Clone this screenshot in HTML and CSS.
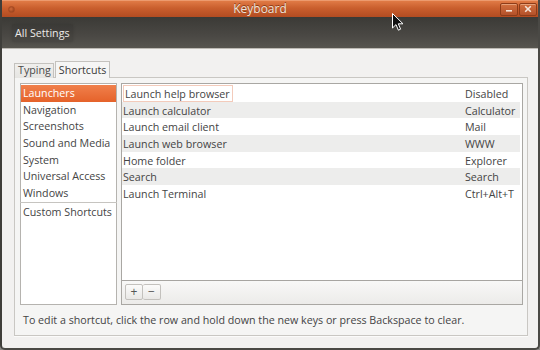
FILE: index.html
```html
<!DOCTYPE html>
<html>
<head>
<meta charset="utf-8">
<link rel="stylesheet" href="styles.css">
</head>
<body>
<div class="window">
  <div class="titlebar">
    <span class="menu-dot"></span>
    <span class="title">Keyboard</span>
    <div class="wbtns">
      <span class="wbtn"><svg width="8" height="8" viewBox="0 0 8 8"><rect x="1" y="5" width="6" height="1.6" fill="#f3e6dc"/></svg></span>
      <span class="wbtn"><svg width="8" height="8" viewBox="0 0 8 8"><path d="M1.2 1.2 L6.8 6.8 M6.8 1.2 L1.2 6.8" stroke="#f3e6dc" stroke-width="1.6"/></svg></span>
    </div>
  </div>
  <div class="toolbar"><span class="allsettings">All Settings</span></div>
  <div class="content">
    <div class="tabs">
      <span class="tab">Typing</span>
      <span class="tab active">Shortcuts</span>
    </div>
    <div class="panel">
      <div class="lists">
        <div class="cats">
          <div class="item selected">Launchers</div>
          <div class="item">Navigation</div>
          <div class="item">Screenshots</div>
          <div class="item">Sound and Media</div>
          <div class="item">System</div>
          <div class="item">Universal Access</div>
          <div class="item">Windows</div>
          <div class="sep"></div>
          <div class="item">Custom Shortcuts</div>
        </div>
        <div class="shortcuts">
          <div class="rows">
            <div class="row"><span class="name"><span class="focus">Launch help browser</span></span><span class="accel">Disabled</span></div>
            <div class="row odd"><span class="name">Launch calculator</span><span class="accel">Calculator</span></div>
            <div class="row"><span class="name">Launch email client</span><span class="accel">Mail</span></div>
            <div class="row odd"><span class="name">Launch web browser</span><span class="accel">WWW</span></div>
            <div class="row"><span class="name">Home folder</span><span class="accel">Explorer</span></div>
            <div class="row odd"><span class="name">Search</span><span class="accel">Search</span></div>
            <div class="row"><span class="name">Launch Terminal</span><span class="accel">Ctrl+Alt+T</span></div>
          </div>
          <div class="bbar">
            <span class="sbtn">+</span><span class="sbtn">−</span>
          </div>
        </div>
      </div>
      <div class="help">To edit a shortcut, click the row and hold down the new keys or press Backspace to clear.</div>
    </div>
  </div>
  <svg class="cursor" width="12" height="19" viewBox="0 0 12 19"><path d="M0.5 0.5 L0.5 15 L4 11.6 L6.4 17.2 L8.6 16.2 L6.3 10.8 L11 10.8 Z" fill="#111" stroke="#fff" stroke-width="1"/></svg>
</div>
</body>
</html>
```
FILE: styles.css
```css
* { box-sizing: border-box; }
html, body { margin: 0; padding: 0; }
body {
  width: 540px;
  height: 350px;
  background: #8a8986;
  font-family: "Open Sans", "DejaVu Sans", sans-serif;
  font-size: 10.7px;
  color: #3c3c3c;
  overflow: hidden;
}
.window {
  position: relative;
  width: 540px;
  height: 350px;
  background: #f2f1f0;
  border-left: 2px solid #3f3e3a;
  border-right: 2px solid #4a4945;
  border-bottom: 2px solid #4a4945;
  border-radius: 0 0 5px 5px;
  display: flex;
  flex-direction: column;
  overflow: hidden;
}
.titlebar {
  height: 17px;
  margin: 0 -2px;
  background: linear-gradient(#e07a45, #c95e2d 45%, #b24c22);
  border-top: 1px solid #ec9a6e;
  display: flex;
  align-items: center;
  position: relative;
}
.menu-dot {
  width: 7px;
  height: 7px;
  border-radius: 50%;
  margin-left: 8px;
  background: radial-gradient(circle at 40% 40%, #d06a3a, #8e3a17);
  border: 1px solid #a64a22;
}
.title {
  position: absolute;
  left: 0;
  right: 20px;
  top: 0;
  text-align: center;
  font-size: 12px;
  line-height: 15px;
  color: #ece4dc;
  text-shadow: 0 -1px 0 #8a3a18;
}
.wbtns {
  margin-left: auto;
  margin-right: 3px;
  display: flex;
  gap: 1px;
}
.wbtn {
  width: 18px;
  height: 13px;
  border: 1px solid #8e3c18;
  border-radius: 2px;
  background: linear-gradient(#d2703f, #b3512a);
  box-shadow: inset 0 1px 0 rgba(255, 220, 190, 0.45);
  display: flex;
  align-items: center;
  justify-content: center;
}
.toolbar {
  height: 32px;
  background: linear-gradient(#3b3a36, #4a4844 60%, #57554f);
  border-bottom: 1px solid #bdbab4;
  display: flex;
  align-items: center;
  padding-left: 10px;
}
.allsettings {
  color: #ecebe8;
  font-size: 10.7px;
  padding: 2px 3px;
  border-radius: 3px;
  background: rgba(0, 0, 0, 0.08);
  box-shadow: 0 0 3px rgba(0, 0, 0, 0.15);
}
.content {
  flex: 1;
  padding: 12px 10px 0 12px;
  display: flex;
  flex-direction: column;
}
.tabs {
  display: flex;
  align-items: flex-end;
  height: 17px;
  position: relative;
  z-index: 1;
  margin-bottom: -1px;
}
.tab {
  height: 15px;
  line-height: 13px;
  padding: 0 2px 0 3px;
  border: 1px solid #c4c2be;
  border-bottom: none;
  background: linear-gradient(#f0efed, #e6e5e2);
  color: #4a4a4a;
}
.tab.active {
  height: 17px;
  line-height: 16px;
  padding: 0 3px;
  margin-left: 1px;
  background: #f6f6f5;
  color: #3a3a3a;
}
.panel {
  height: 259px;
  border: 1px solid #c9c7c3;
  background: #f5f5f4;
  padding: 5px 4px 0 5px;
  display: flex;
  flex-direction: column;
  box-shadow: 0 1px 0 #fbfbfa;
}
.lists {
  height: 222px;
  display: flex;
  gap: 4px;
}
.cats {
  width: 97px;
  border: 1px solid #b5b3af;
  background: #fff;
  padding-top: 1px;
}
.item {
  height: 16.67px;
  line-height: 16px;
  padding-left: 2px;
  white-space: nowrap;
  color: #444;
}
.item.selected {
  background: linear-gradient(#f0804c, #e5622a);
  color: #fff;
}
.sep {
  height: 1px;
  background: #c6c4c0;
  margin: 0 -1px 1px -1px;
}
.shortcuts {
  flex: 1;
  border: 1px solid #a9a7a3;
  background: #fff;
  display: flex;
  flex-direction: column;
}
.rows {
  flex: 1;
  padding: 1px 2px 0 0;
}
.row {
  height: 16.67px;
  display: flex;
  align-items: stretch;
  white-space: nowrap;
}
.row.odd { background: #ededec; }
.name {
  flex: 1;
  padding: 1px 0 0 1px;
  line-height: 16px;
  color: #444;
}
.focus {
  display: inline-block;
  height: 16.67px;
  margin-top: -1px;
  line-height: 16px;
  padding: 0 2px 0 1px;
  border: 1px solid #f3cbbb;
}
.accel {
  width: 58px;
  padding: 1px 0 0 3px;
  line-height: 16px;
  color: #444;
}
.bbar {
  height: 24px;
  border-top: 1px solid #a7a5a1;
  background: linear-gradient(#f8f8f7, #ecebe9);
  padding: 3px 0 0 3px;
  display: flex;
}
.sbtn {
  width: 18px;
  height: 16px;
  border: 1px solid #c3c1bd;
  border-radius: 2px;
  background: linear-gradient(#fbfbfa, #e9e8e6);
  display: flex;
  align-items: center;
  justify-content: center;
  font-size: 12px;
  line-height: 12px;
  color: #555;
}
.sbtn + .sbtn { border-left: none; }
.help {
  padding: 8px 0 0 3px;
  line-height: 15px;
  color: #444;
  white-space: nowrap;
}
.cursor {
  position: absolute;
  left: 390px;
  top: 13px;
}
```
